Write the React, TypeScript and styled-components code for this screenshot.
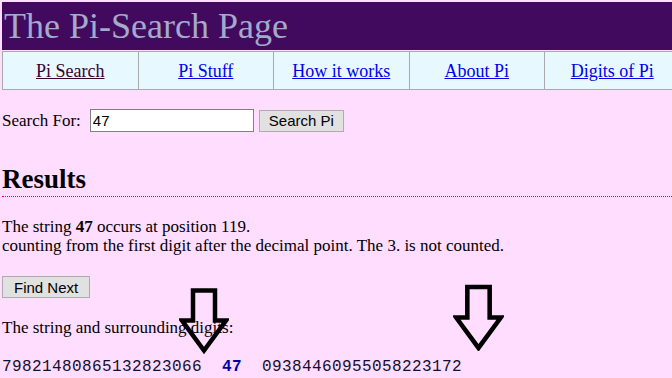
import styled, { createGlobalStyle } from 'styled-components';

const GlobalStyle = createGlobalStyle`
	html, body {
		margin: 0;
		padding: 0;
		background: #ffddff;
	}
	body {
		font-family: 'Liberation Serif', 'Times New Roman', serif;
		font-size: 17px;
		color: #000;
		overflow: hidden;
	}
`;

const navItems = [
	{ label: 'Pi Search', current: true },
	{ label: 'Pi Stuff', current: false },
	{ label: 'How it works', current: false },
	{ label: 'About Pi', current: false },
	{ label: 'Digits of Pi', current: false },
];

const DownArrow = ({ left, top, width, height }: { left: number; top: number; width: number; height: number }) => (
	<ArrowWrap style={{ left, top }}>
		<svg width={width} height={height} viewBox="0 0 50 66">
			<path
				d="M14 3 H36 V33 H47 L25 63 L3 33 H14 Z"
				fill="none"
				stroke="#000"
				strokeWidth="4.5"
				strokeLinejoin="miter"
			/>
		</svg>
	</ArrowWrap>
);

const App = () => {
	return (
		<Page>
			<GlobalStyle />
			<Header>The Pi-Search Page</Header>
			<Nav>
				{navItems.map((item) => (
					<NavCell key={item.label}>
						<NavLink href="#" $current={item.current}>
							{item.label}
						</NavLink>
					</NavCell>
				))}
			</Nav>
			<SearchForm onSubmit={(e) => e.preventDefault()}>
				<Label htmlFor="q">Search For:</Label>
				<SearchInput id="q" defaultValue="47" />
				<Button type="submit" $pad={9}>Search Pi</Button>
			</SearchForm>
			<Heading>Results</Heading>
			<Para>
				The string <b>47</b> occurs at position 119.
				<br />
				counting from the first digit after the decimal point. The 3. is not counted.
			</Para>
			<Button type="button" $pad={11}>Find Next</Button>
			<Para>The string and surrounding digits:</Para>
			<Digits>
				{'79821480865132823066  '}
				<Match>47</Match>
				{'  09384460955058223172'}
			</Digits>
			<DownArrow left={179} top={287} width={50} height={67} />
			<DownArrow left={453} top={284} width={51} height={67} />
		</Page>
	);
};

export default App;

const Page = styled.div`
	position: relative;
	padding: 2px 0 0 2px;
	height: 376px;
`;

const Header = styled.h1`
	margin: 0;
	height: 48px;
	background: #420a5e;
	color: #a3abcb;
	font-weight: normal;
	font-size: 36px;
	line-height: 48px;
	padding-left: 2px;
	white-space: nowrap;
`;

const Nav = styled.div`
	display: flex;
	width: 680px;
	margin-top: 1px;
	border-top: 1px solid #aaaaaa;
	border-bottom: 1px solid #aaaaaa;
	background: #e8f8ff;
`;

const NavCell = styled.div`
	flex: 0 0 135.5px;
	height: 37px;
	border-left: 1px solid #aaaaaa;
	display: flex;
	align-items: center;
	justify-content: center;
	box-sizing: border-box;
	padding-top: 2px;
	font-size: 18px;
`;

const NavLink = styled.a<{ $current: boolean }>`
	color: ${(p) => (p.$current ? '#3a0030' : '#0000ee')};
	text-decoration: underline;
`;

const SearchForm = styled.form`
	display: flex;
	align-items: center;
	gap: 5px;
	margin: 19px 0 0;
`;

const Label = styled.label`
	margin-right: 4px;
`;

const SearchInput = styled.input`
	width: 158px;
	height: 17px;
	padding: 2px 2px;
	border: 1px solid #808080;
	font-family: 'Liberation Sans', Arial, sans-serif;
	font-size: 15px;
	background: #fff;
`;

const Button = styled.button<{ $pad: number }>`
	font-family: 'Liberation Sans', Arial, sans-serif;
	font-size: 15px;
	color: #000;
	background: #e1e1e1;
	border: 1px solid #adadad;
	height: 22px;
	padding: 0 ${(p) => p.$pad}px;
	border-radius: 0;
`;

const Heading = styled.h2`
	margin: 33px 0 0;
	font-size: 27px;
	line-height: 28px;
	padding-bottom: 3px;
	border-bottom: 1px dotted #ff0000;
`;

const Para = styled.p`
	margin: 20px 0 21px;
	line-height: 19px;
`;

const Digits = styled.pre`
	margin: 0;
	font-family: 'Liberation Mono', 'Courier New', monospace;
	font-size: 16px;
	letter-spacing: 0.4px;
	color: #101030;
`;

const Match = styled.b`
	color: #0000aa;
`;

const ArrowWrap = styled.div`
	position: absolute;
	line-height: 0;
`;
